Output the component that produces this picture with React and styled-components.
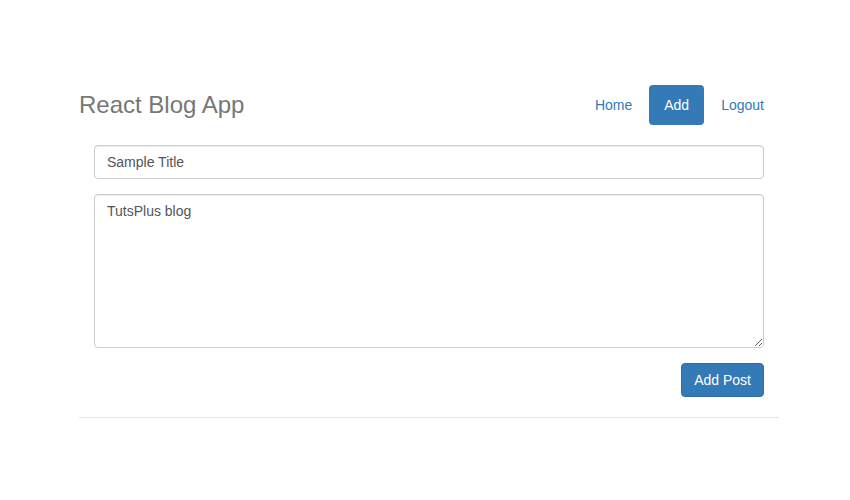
import React from "react";
import styled, { createGlobalStyle } from "styled-components";

const GlobalStyle = createGlobalStyle`
  * { box-sizing: border-box; }
  body {
    margin: 0;
    background: #fff;
    font-family: "Liberation Sans", Arial, sans-serif;
    font-size: 14px;
    line-height: 1.42857;
    color: #333;
  }
`;

const Page = styled.div`
  padding: 85px 0 0 79px;
`;

const Container = styled.div`
  width: 700px;
`;

const Header = styled.div`
  display: flex;
  justify-content: space-between;
  align-items: center;
  margin-bottom: 20px;
`;

const Title = styled.h3`
  margin: 0;
  font-size: 24px;
  font-weight: 500;
  line-height: 40px;
  color: #777;
`;

const Nav = styled.ul`
  display: flex;
  list-style: none;
  margin: 0;
  padding: 0;
  gap: 2px;
`;

const Pill = styled.a`
  display: block;
  padding: 10px 15px;
  border-radius: 4px;
  line-height: 20px;
  text-decoration: none;
  color: ${(p) => (p.$active ? "#fff" : "#337ab7")};
  background: ${(p) => (p.$active ? "#337ab7" : "transparent")};
  cursor: pointer;
`;

const Form = styled.form`
  padding: 0 15px;
  display: flex;
  flex-direction: column;
  gap: 15px;
`;

const fieldCss = `
  display: block;
  width: 100%;
  padding: 6px 12px;
  font-family: "Liberation Sans", Arial, sans-serif;
  font-size: 14px;
  line-height: 20px;
  color: #555;
  background: #fff;
  border: 1px solid #ccc;
  border-radius: 4px;
  box-shadow: inset 0 1px 1px rgba(0, 0, 0, 0.075);
  outline: none;
`;

const Input = styled.input`
  ${fieldCss}
  height: 34px;
`;

const TextArea = styled.textarea`
  ${fieldCss}
  height: 154px;
  resize: vertical;
`;

const Actions = styled.div`
  display: flex;
  justify-content: flex-end;
`;

const Button = styled.button`
  padding: 6px 12px;
  font-family: "Liberation Sans", Arial, sans-serif;
  font-size: 14px;
  line-height: 20px;
  color: #fff;
  background: #337ab7;
  border: 1px solid #2e6da4;
  border-radius: 4px;
  cursor: pointer;
`;

const Divider = styled.hr`
  margin: 20px 0 0;
  border: 0;
  border-top: 1px solid #e5e5e5;
`;

export default function App() {
  return (
    <>
      <GlobalStyle />
      <Page>
        <Container>
          <Header>
            <Title>React Blog App</Title>
            <Nav>
              <li><Pill>Home</Pill></li>
              <li><Pill $active>Add</Pill></li>
              <li><Pill>Logout</Pill></li>
            </Nav>
          </Header>
          <Form onSubmit={(e) => e.preventDefault()}>
            <Input type="text" defaultValue="Sample Title" />
            <TextArea defaultValue="TutsPlus blog" />
            <Actions>
              <Button type="submit">Add Post</Button>
            </Actions>
          </Form>
          <Divider />
        </Container>
      </Page>
    </>
  );
}
